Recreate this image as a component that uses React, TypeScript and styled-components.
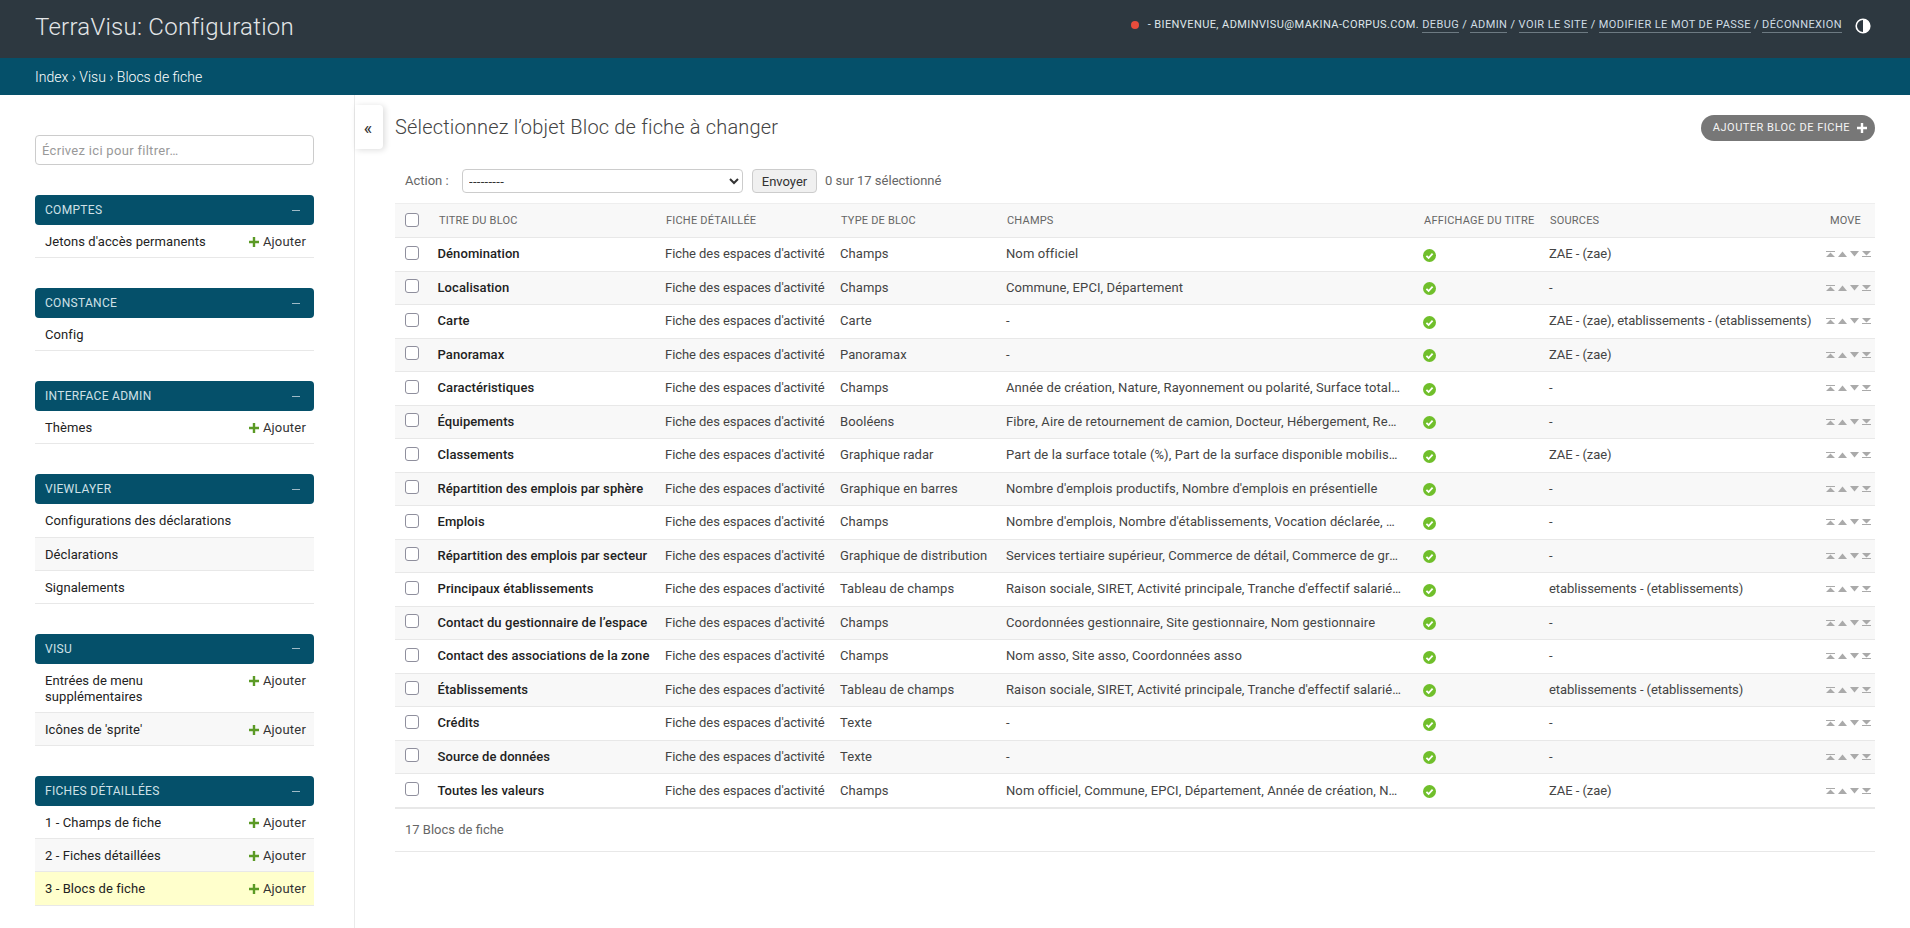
import React from 'react'
import styled, { createGlobalStyle } from 'styled-components'

const FONT = `Roboto, 'Noto Sans', 'Liberation Sans', sans-serif`

const GlobalStyle = createGlobalStyle`
  html, body {
    margin: 0;
    padding: 0;
    background: #fff;
  }
  body {
    font-family: ${FONT};
    font-size: 13px;
    line-height: 16px;
    color: #333;
    overflow: hidden;
  }
  * {
    box-sizing: border-box;
  }
`

const Page = styled.div`
  display: flex;
  flex-direction: column;
  height: 928px;
`

const Header = styled.header`
  display: flex;
  justify-content: space-between;
  height: 58px;
  flex: none;
  padding: 0 35px;
  background: #2d3840;
`

const Branding = styled.h1`
  margin: 12px 0 0;
  font-size: 24px;
  line-height: 30px;
  font-weight: 300;
  letter-spacing: 0.25px;
  color: #e3e6e8;
`

const UserTools = styled.div`
  display: flex;
  align-items: center;
  height: 50px;
  margin-right: 4px;
  font-size: 11px;
  letter-spacing: 0.41px;
  text-transform: uppercase;
  color: #dfe6ea;
  white-space: pre;
`

const StatusDot = styled.span`
  width: 8px;
  height: 8px;
  margin-right: 9px;
  border-radius: 50%;
  background: #e74c3c;
`

const UserLink = styled.a`
  border-bottom: 1px solid #6d7a82;
  line-height: 14px;
  margin-top: 1px;
  color: #cfdce4;
`

const ThemeIcon = styled.svg`
  width: 16px;
  height: 16px;
  margin: 2px 0 0 13px;
`

const Breadcrumbs = styled.nav`
  display: flex;
  align-items: center;
  height: 37px;
  flex: none;
  padding: 0 35px;
  font-size: 14px;
  font-weight: 300;
  color: #fff;
  background: #05506a;
`

const Main = styled.div`
  position: relative;
  display: flex;
  flex: 1;
  min-height: 0;
`

const Sidebar = styled.aside`
  width: 355px;
  flex: none;
  padding: 40px 40px 0 35px;
  letter-spacing: 0.08px;
  border-right: 1px solid #eaeaea;
`

const FilterInput = styled.input`
  display: block;
  width: 100%;
  height: 30px;
  margin-bottom: 30px;
  padding: 2px 6px;
  font-family: ${FONT};
  font-size: 13px;
  letter-spacing: 0.3px;
  color: #333;
  border: 1px solid #ccc;
  border-radius: 4px;
  outline: none;

  &::placeholder {
    color: #999;
  }
`

const AppModule = styled.section`
  margin-bottom: 30px;
`

const ModuleCaption = styled.div`
  display: flex;
  align-items: center;
  justify-content: space-between;
  height: 30px;
  padding: 0 10px;
  font-size: 12px;
  letter-spacing: 0.3px;
  text-transform: uppercase;
  color: #cfe0e7;
  background: #05506a;
  border-radius: 4px;
`

const CollapseMark = styled.span`
  width: 8px;
  height: 1px;
  margin-right: 4px;
  background: #9fbac6;
`

const ModelRow = styled.div<{ $alt?: boolean; $current?: boolean }>`
  display: flex;
  align-items: flex-start;
  justify-content: space-between;
  padding: 9px 8px 7.15px 10px;
  border-bottom: 1px solid #e8e8e8;
  color: #222;
  background: ${({ $current, $alt }) => ($current ? '#ffffcc' : $alt ? '#f8f8f8' : '#fff')};
`

const ModelName = styled.a<{ $withAdd: boolean }>`
  max-width: ${({ $withAdd }) => ($withAdd ? '180px' : 'none')};
`

const AddLink = styled.a`
  display: flex;
  align-items: center;
  gap: 4px;
  flex: none;
  letter-spacing: 0.2px;
  color: #333;
`

const PlusIcon = styled.svg`
  width: 10px;
  height: 10px;
`

const ToggleNav = styled.button`
  position: absolute;
  left: 355px;
  top: 10px;
  width: 28px;
  height: 44px;
  padding: 0 2px 0 0;
  font-family: ${FONT};
  font-size: 18px;
  color: #333;
  background: #fff;
  border: none;
  border-radius: 0 4px 4px 0;
  box-shadow: 2px 1px 6px rgba(0, 0, 0, 0.14);
`

const Content = styled.main`
  flex: 1;
  min-width: 0;
  padding: 20px 35px 0 40px;
`

const TitleBar = styled.div`
  display: flex;
  align-items: center;
  justify-content: space-between;
  height: 26px;
  margin-bottom: 28px;
`

const PageTitle = styled.h2`
  margin: 0 0 2px;
  font-size: 20px;
  line-height: 24px;
  font-weight: 300;
  letter-spacing: 0.17px;
  color: #444;
`

const ObjectTool = styled.a`
  display: flex;
  align-items: center;
  gap: 7px;
  height: 26px;
  padding: 0 8px 0 12px;
  font-size: 11px;
  letter-spacing: 0.5px;
  text-transform: uppercase;
  color: #f4f4f4;
  background: #777;
  border-radius: 15px;
`

const Actions = styled.div`
  display: flex;
  align-items: center;
  height: 24px;
  margin-bottom: 10px;
  padding-left: 10px;
  color: #666;
`

const ActionLabel = styled.label`
  width: 57px;
`

const ActionSelect = styled.select`
  width: 281px;
  height: 24px;
  margin-right: 9px;
  padding: 0 2px;
  font-family: ${FONT};
  font-size: 13px;
  letter-spacing: 0.3px;
  color: #333;
  background: #fff;
  border: 1px solid #ccc;
  border-radius: 4px;
`

const GoButton = styled.button`
  width: 65px;
  height: 24px;
  margin-right: 8px;
  padding: 0;
  font-family: ${FONT};
  font-size: 13px;
  color: #333;
  background: #f0f0f0;
  border: 1px solid #ccc;
  border-radius: 4px;
`

const Table = styled.table`
  width: 100%;
  table-layout: fixed;
  border-collapse: collapse;
`

const HeadCell = styled.th<{ $align?: string }>`
  height: 34px;
  padding: ${({ $align }) => ($align === 'right' ? '0 14px 0 0' : '0 0 0 11px')};
  font-size: 11px;
  font-weight: 400;
  letter-spacing: 0.2px;
  white-space: nowrap;
  text-align: ${({ $align }) => $align ?? 'left'};
  text-transform: uppercase;
  color: #666;
  background: #f8f8f8;
  border-top: 1px solid #eee;
  border-bottom: 1px solid #e8e8e8;
`

const Row = styled.tr<{ $alt: boolean }>`
  height: 33.53px;
  background: ${({ $alt }) => ($alt ? '#f8f8f8' : '#fff')};
`

const Cell = styled.td<{ $tight?: boolean }>`
  padding: 0 0 0 10px;
  white-space: nowrap;
  letter-spacing: ${({ $tight }) => ($tight ? '-0.06px' : '0.08px')};
  color: #444;
  border-bottom: 1px solid #e8e8e8;
`

const FieldsCell = styled(Cell)`
  padding-right: 11px;
  overflow: hidden;
  letter-spacing: 0.1px;
  text-overflow: ellipsis;
`

const TitleCell = styled(Cell)`
  padding-left: 9.5px;
  font-weight: 500;
  color: #222;
`

const Check = styled.input`
  display: block;
  width: 14px;
  height: 14px;
  margin: 0 0 3px;
  appearance: none;
  background: #fff;
  border: 1px solid #8f8f9d;
  border-radius: 3px;
`

const HeadCheck = styled(Check)`
  margin: 0 0 1px -1px;
`

const YesIcon = styled.svg`
  display: block;
  width: 13px;
  height: 13px;
  margin-top: 2px;
`

const MoveGroup = styled.div`
  display: flex;
  justify-content: flex-end;
  gap: 3px;
  margin-right: 4px;
`

const MoveIcon = styled.svg`
  width: 9px;
  height: 6px;
`

const Paginator = styled.p`
  height: 44px;
  margin: 0;
  padding-left: 10px;
  line-height: 41px;
  color: #666;
  border-top: 1px solid #e8e8e8;
  border-bottom: 1px solid #e8e8e8;
`

const Plus = ({ color }: { color: string }) => (
  <PlusIcon viewBox="0 0 10 10">
    <path d="M3.8 0h2.4v3.8H10v2.4H6.2V10H3.8V6.2H0V3.8h3.8z" fill={color} />
  </PlusIcon>
)

const MOVE_PATHS = ['M0 0h9v1H0zM4.5 1.5 9 6H0z', 'M4.5 .5 9 6H0z', 'M0 0h9L4.5 5.5z', 'M0 0h9L4.5 4.5zM0 5h9v1H0z']

const Move = () => (
  <MoveGroup>
    {MOVE_PATHS.map((d) => (
      <MoveIcon key={d} viewBox="0 0 9 6">
        <path d={d} fill="#aaa" />
      </MoveIcon>
    ))}
  </MoveGroup>
)

const Yes = () => (
  <YesIcon viewBox="0 0 13 13">
    <circle cx="6.5" cy="6.5" r="6.5" fill="#70bf2b" />
    <path d="M3.4 6.8 5.6 9l4-4.4" fill="none" stroke="#fff" strokeWidth="1.8" />
  </YesIcon>
)

const SIDEBAR = [
  { name: 'Comptes', models: [{ name: "Jetons d'accès permanents", add: true }] },
  { name: 'Constance', models: [{ name: 'Config' }] },
  { name: 'Interface admin', models: [{ name: 'Thèmes', add: true }] },
  {
    name: 'Viewlayer',
    models: [{ name: 'Configurations des déclarations' }, { name: 'Déclarations' }, { name: 'Signalements' }],
  },
  {
    name: 'Visu',
    models: [
      { name: 'Entrées de menu supplémentaires', add: true },
      { name: "Icônes de 'sprite'", add: true },
    ],
  },
  {
    name: 'Fiches détaillées',
    models: [
      { name: '1 - Champs de fiche', add: true },
      { name: '2 - Fiches détaillées', add: true },
      { name: '3 - Blocs de fiche', add: true, current: true },
    ],
  },
]

const COLUMNS = [
  { label: '', width: 33 },
  { label: 'Titre du bloc', width: 227 },
  { label: 'Fiche détaillée', width: 175 },
  { label: 'Type de bloc', width: 166 },
  { label: 'Champs', width: 417 },
  { label: 'Affichage du titre', width: 126 },
  { label: 'Sources', width: 276 },
  { label: 'Move', width: 60 },
]

const ZAE = 'ZAE - (zae)'
const ETAB = 'etablissements - (etablissements)'

const ROWS = [
  ['Dénomination', 'Champs', 'Nom officiel', ZAE],
  ['Localisation', 'Champs', 'Commune, EPCI, Département', '-'],
  ['Carte', 'Carte', '-', `${ZAE}, ${ETAB}`],
  ['Panoramax', 'Panoramax', '-', ZAE],
  ['Caractéristiques', 'Champs', 'Année de création, Nature, Rayonnement ou polarité, Surface totale, Surface disponible', '-'],
  ['Équipements', 'Booléens', 'Fibre, Aire de retournement de camion, Docteur, Hébergement, Restauration, Crèche', '-'],
  ['Classements', 'Graphique radar', 'Part de la surface totale (%), Part de la surface disponible mobilisable (%), Nombre', ZAE],
  ['Répartition des emplois par sphère', 'Graphique en barres', "Nombre d'emplois productifs, Nombre d'emplois en présentielle", '-'],
  ['Emplois', 'Champs', "Nombre d'emplois, Nombre d'établissements, Vocation déclarée, Vocation réelle", '-'],
  ['Répartition des emplois par secteur', 'Graphique de distribution', 'Services tertiaire supérieur, Commerce de détail, Commerce de gros, Industrie', '-'],
  ['Principaux établissements', 'Tableau de champs', "Raison sociale, SIRET, Activité principale, Tranche d'effectif salarié, Adresse", ETAB],
  ['Contact du gestionnaire de l’espace', 'Champs', 'Coordonnées gestionnaire, Site gestionnaire, Nom gestionnaire', '-'],
  ['Contact des associations de la zone', 'Champs', 'Nom asso, Site asso, Coordonnées asso', '-'],
  ['Établissements', 'Tableau de champs', "Raison sociale, SIRET, Activité principale, Tranche d'effectif salarié, Adresse", ETAB],
  ['Crédits', 'Texte', '-', '-'],
  ['Source de données', 'Texte', '-', '-'],
  ['Toutes les valeurs', 'Champs', 'Nom officiel, Commune, EPCI, Département, Année de création, Nature, Rayonnement', ZAE],
]

export default function App() {
  return (
    <Page>
      <GlobalStyle />
      <Header>
        <Branding>TerraVisu: Configuration</Branding>
        <UserTools>
          <StatusDot />
          {'- Bienvenue, adminvisu@makina-corpus.com. '}
          <UserLink>Debug</UserLink>
          {' / '}
          <UserLink>Admin</UserLink>
          {' / '}
          <UserLink>Voir le site</UserLink>
          {' / '}
          <UserLink>Modifier le mot de passe</UserLink>
          {' / '}
          <UserLink>Déconnexion</UserLink>
          <ThemeIcon viewBox="0 0 16 16">
            <circle cx="8" cy="8" r="6.8" fill="none" stroke="#fff" strokeWidth="1.6" />
            <path d="M8 1.2a6.8 6.8 0 0 1 0 13.6z" fill="#fff" />
          </ThemeIcon>
        </UserTools>
      </Header>
      <Breadcrumbs>Index › Visu › Blocs de fiche</Breadcrumbs>
      <Main>
        <Sidebar>
          <FilterInput placeholder="Écrivez ici pour filtrer…" />
          {SIDEBAR.map((mod) => (
            <AppModule key={mod.name}>
              <ModuleCaption>
                {mod.name}
                <CollapseMark />
              </ModuleCaption>
              {mod.models.map((model, i) => (
                <ModelRow key={model.name} $alt={i % 2 === 1} $current={'current' in model && model.current}>
                  <ModelName $withAdd={'add' in model}>{model.name}</ModelName>
                  {'add' in model && model.add && (
                    <AddLink>
                      <Plus color="#5b9a25" />
                      Ajouter
                    </AddLink>
                  )}
                </ModelRow>
              ))}
            </AppModule>
          ))}
        </Sidebar>
        <ToggleNav>«</ToggleNav>
        <Content>
          <TitleBar>
            <PageTitle>Sélectionnez l’objet Bloc de fiche à changer</PageTitle>
            <ObjectTool>
              Ajouter bloc de fiche
              <Plus color="#fff" />
            </ObjectTool>
          </TitleBar>
          <Actions>
            <ActionLabel>Action :</ActionLabel>
            <ActionSelect defaultValue="">
              <option value="">---------</option>
            </ActionSelect>
            <GoButton>Envoyer</GoButton>
            0 sur 17 sélectionné
          </Actions>
          <Table>
            <colgroup>
              {COLUMNS.map((col) => (
                <col key={col.label} width={col.width} />
              ))}
            </colgroup>
            <thead>
              <tr>
                {COLUMNS.map((col, i) => (
                  <HeadCell key={col.label} $align={col.label === 'Move' ? 'right' : 'left'}>
                    {i === 0 ? <HeadCheck type="checkbox" /> : col.label}
                  </HeadCell>
                ))}
              </tr>
            </thead>
            <tbody>
              {ROWS.map(([title, type, fields, sources], i) => (
                <Row key={title} $alt={i % 2 === 1}>
                  <Cell>
                    <Check type="checkbox" />
                  </Cell>
                  <TitleCell>{title}</TitleCell>
                  <Cell $tight>Fiche des espaces d'activité</Cell>
                  <Cell>{type}</Cell>
                  <FieldsCell>{fields}</FieldsCell>
                  <Cell>
                    <Yes />
                  </Cell>
                  <Cell $tight>{sources}</Cell>
                  <Cell>
                    <Move />
                  </Cell>
                </Row>
              ))}
            </tbody>
          </Table>
          <Paginator>17 Blocs de fiche</Paginator>
        </Content>
      </Main>
    </Page>
  )
}
